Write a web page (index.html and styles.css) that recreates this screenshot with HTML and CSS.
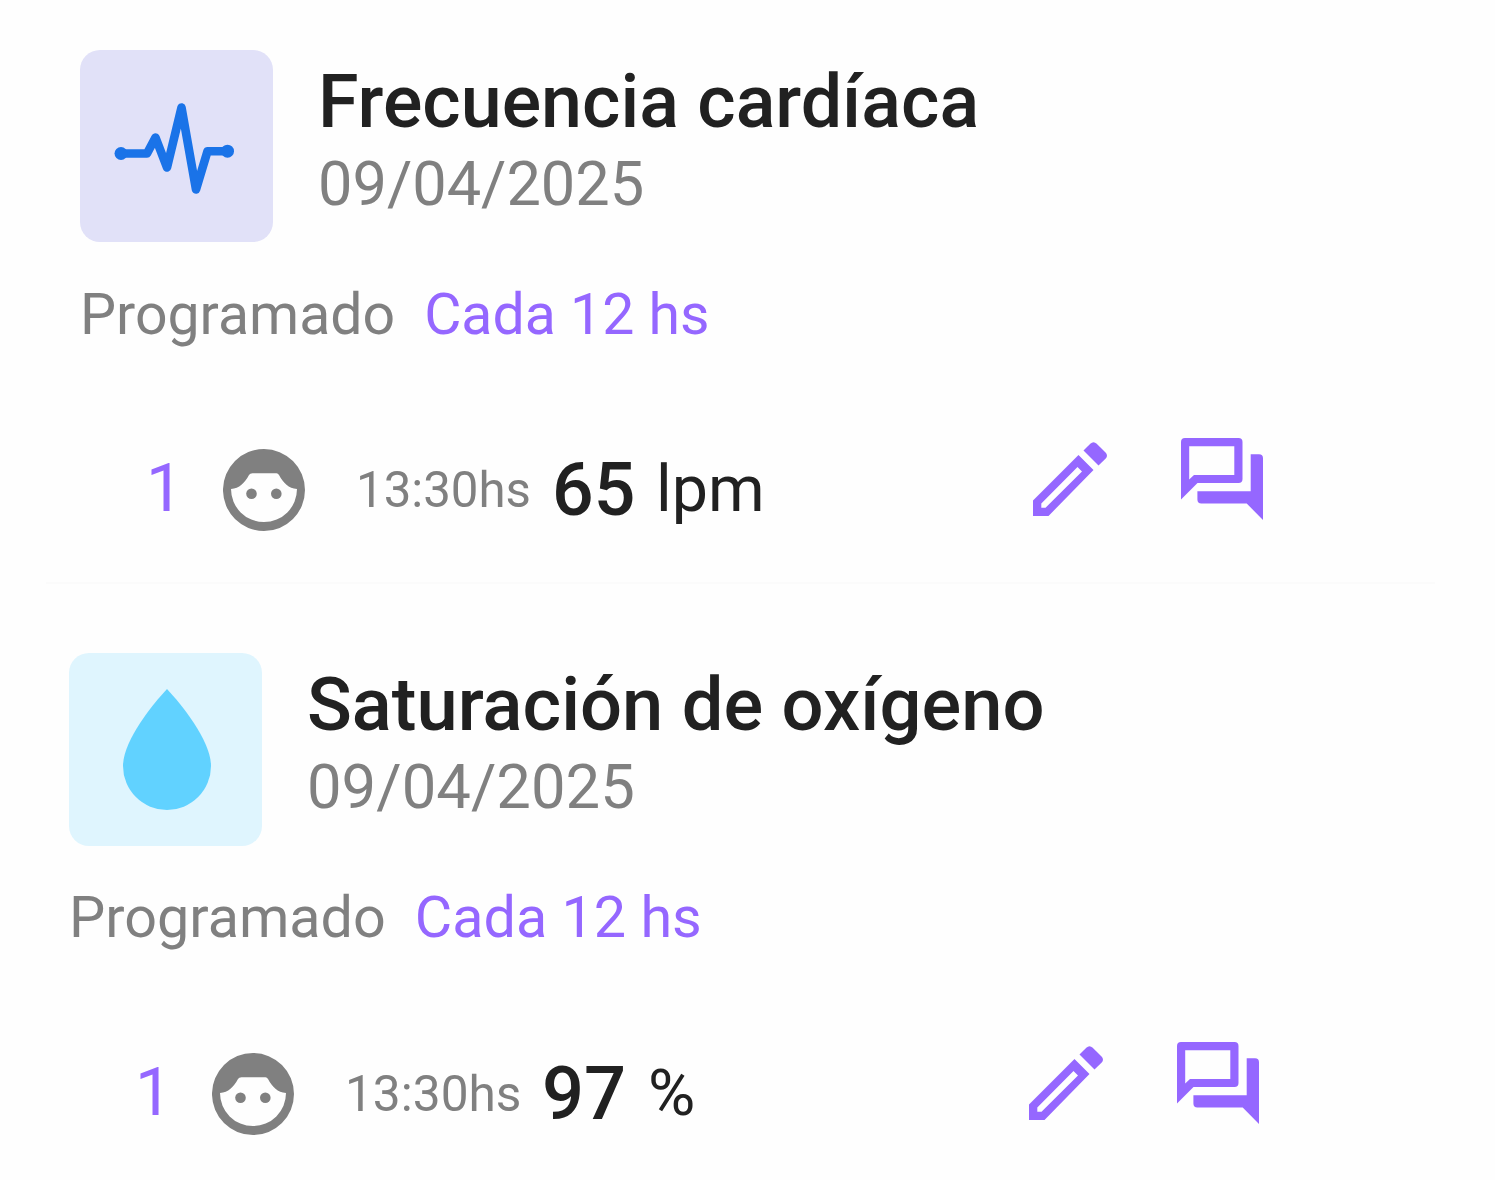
FILE: index.html
```html
<!DOCTYPE html>
<html lang="es">
<head>
    <meta charset="UTF-8">
    <meta name="viewport" content="width=device-width, initial-scale=1.0">
    <title>Controles</title>
    <link rel="stylesheet" href="styles.css">
</head>
<body>
    <svg width="0" height="0" class="sprite">
        <symbol id="face" viewBox="0 0 82 82">
            <path fill-rule="evenodd" d="M41 0a41 41 0 1 0 0 82a41 41 0 0 0 0-82zM29.500 24.300h24q1.500 0 2.500 1.800c4.500 8.200 9.500 13.200 18 14a33 33 0 0 1-66 0c8.500-.8 13.500-5.800 18-14q1-1.800 3.500-1.800z"/>
            <circle cx="28.500" cy="44.800" r="5.300"/>
            <circle cx="53.300" cy="44.800" r="5.300"/>
        </symbol>
        <symbol id="edit" viewBox="0 0 74 74">
            <path fill-rule="evenodd" d="M0 58.500 45.500 13 60.500 28 15.500 74H0zM8.300 61.500V65.700H12.500L49 29.500 44.500 25z"/>
            <path d="M50.500 8.500 57.300 1.700Q60.500-1.300 63.700 1.700L72.500 10.500Q75.500 13.700 72.500 16.700L65.500 23.500z"/>
        </symbol>
        <symbol id="forum" viewBox="0 0 82 82">
            <path fill-rule="evenodd" d="M4 0H57.500Q61.500 0 61.500 4V41Q61.500 45 57.500 45H16.500L0 61.500V4Q0 0 4 0zM8.200 8.200V41.500L13 36.900H53.300V8.200z"/>
            <path d="M69.700 16.300H78Q82 16.300 82 20.300V82L65.700 65.500H20.400Q16.400 65.500 16.400 61.500V53.300H69.700z"/>
        </symbol>
    </svg>

    <section class="control heart">
        <div class="header">
            <div class="tile">
                <svg viewBox="0 0 192 192" fill="none" stroke="#1a73e8" stroke-width="8.600" stroke-linecap="round" stroke-linejoin="round">
                    <path d="M40 103.500H66.500L75 87.500 86.500 117.500 101 57.500 115.500 139.500 127 101.200H147"/>
                    <circle cx="40.500" cy="103.500" r="6.500" fill="#1a73e8" stroke="none"/>
                    <circle cx="147" cy="101.200" r="6.500" fill="#1a73e8" stroke="none"/>
                </svg>
            </div>
            <div class="heading">
                <h2>Frecuencia cardíaca</h2>
                <p class="date">09/04/2025</p>
            </div>
        </div>
        <div class="plan">
            <span>Programado</span>
            <span class="every">Cada 12 hs</span>
        </div>
        <div class="record">
            <span class="number">1</span>
            <svg class="face"><use href="#face"/></svg>
            <span class="time">13:30hs</span>
            <span class="value">65</span>
            <span class="unit">lpm</span>
            <div class="actions">
                <svg class="edit"><use href="#edit"/></svg>
                <svg class="forum"><use href="#forum"/></svg>
            </div>
        </div>
    </section>

    <hr>

    <section class="control oxygen">
        <div class="header">
            <div class="tile">
                <svg viewBox="0 0 193 193" fill="#61d2ff">
                    <path d="M98 36C113 52 142 88 142 113A44 44 0 0 1 54 113C54 88 83 52 98 36z"/>
                </svg>
            </div>
            <div class="heading">
                <h2>Saturación de oxígeno</h2>
                <p class="date">09/04/2025</p>
            </div>
        </div>
        <div class="plan">
            <span>Programado</span>
            <span class="every">Cada 12 hs</span>
        </div>
        <div class="record">
            <span class="number">1</span>
            <svg class="face"><use href="#face"/></svg>
            <span class="time">13:30hs</span>
            <span class="value">97</span>
            <span class="unit">%</span>
            <div class="actions">
                <svg class="edit"><use href="#edit"/></svg>
                <svg class="forum"><use href="#forum"/></svg>
            </div>
        </div>
    </section>
</body>
</html>
```
FILE: styles.css
```css
body {
    margin: 0;
    background-color: #fefefe;
    font-family: Roboto, sans-serif;
    color: #212121;
    height: 1180px;
    overflow: hidden;
}

.sprite {
    display: block;
}

.control {
    box-sizing: border-box;
    height: 582px;
    padding-top: 50px;
}

.heart {
    padding-left: 80px;
    padding-right: 232px;
}

.header {
    display: flex;
}

.tile {
    width: 193px;
    height: 192px;
    border-radius: 20px;
    background-color: #e1e1f8;
}

.tile svg {
    display: block;
    width: 100%;
    height: 100%;
}

.heading {
    margin-left: 45px;
    padding-top: 11px;
}

h2 {
    margin: 0;
    font-size: 73.6px;
    font-weight: 500;
    line-height: 82px;
    white-space: nowrap;
}

.date {
    margin: 0;
    font-size: 61.3px;
    line-height: 82px;
    color: #808080;
}

.plan {
    display: flex;
    gap: 29px;
    margin-top: 33px;
    font-size: 57.2px;
    line-height: 80px;
    color: #808080;
}

.every {
    color: #9567ff;
}

.record {
    display: flex;
    align-items: center;
    height: 90px;
    margin-top: 90px;
    line-height: 90px;
    white-space: nowrap;
}

.number {
    width: 77px;
    margin-left: 66px;
    margin-bottom: 2px;
    font-size: 66px;
    color: #9567ff;
}

.face {
    width: 82px;
    height: 82px;
    fill: #808080;
}

.time {
    width: 196px;
    margin-left: 51px;
    font-size: 49.2px;
    color: #808080;
}

.value {
    width: 104px;
    font-size: 73.3px;
    font-weight: 500;
}

.unit {
    margin-bottom: 2px;
    font-size: 64.6px;
}

.actions {
    display: flex;
    gap: 74px;
    align-items: center;
    margin-left: auto;
    margin-bottom: 23px;
    fill: #9567ff;
}

.edit {
    width: 74px;
    height: 74px;
}

.forum {
    width: 82px;
    height: 82px;
}

hr {
    height: 2px;
    margin: 0 60px 0 46px;
    border: none;
    background-color: #fbfbfb;
}

.oxygen {
    height: 596px;
    padding: 69px 236px 0 69px;
}

.oxygen .tile {
    height: 193px;
    background-color: #dff5fe;
}

.oxygen h2 {
    font-size: 74.1px;
}

.oxygen .date {
    font-size: 61.6px;
}

.oxygen .plan {
    margin-top: 32px;
    font-size: 57.5px;
}

.oxygen .record {
    margin-top: 91px;
}

.oxygen .time {
    width: 197px;
    font-size: 49.6px;
}

.oxygen .value {
    width: 106px;
    font-size: 74px;
}
```
